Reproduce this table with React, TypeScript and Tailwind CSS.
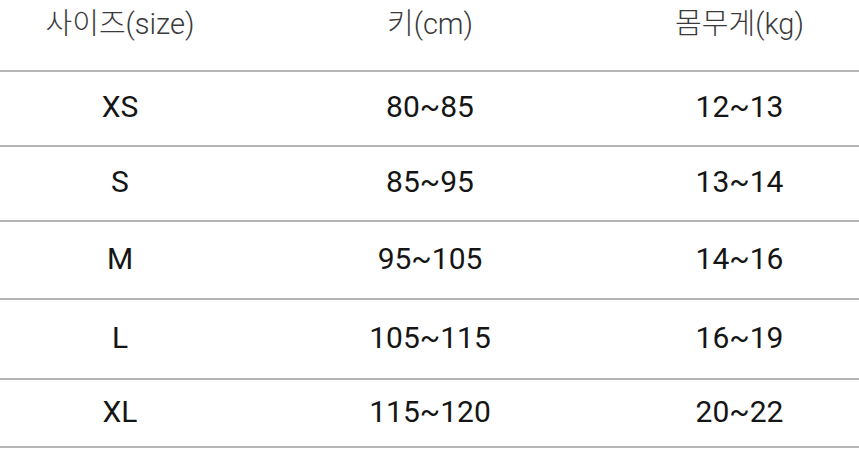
const rows = [
  { size: "XS", height: "80~85", weight: "12~13", h: "h-[73px]" },
  { size: "S", height: "85~95", weight: "13~14", h: "h-[73px]" },
  { size: "M", height: "95~105", weight: "14~16", h: "h-[76px]" },
  { size: "L", height: "105~115", weight: "16~19", h: "h-[78px]" },
  { size: "XL", height: "115~120", weight: "20~22", h: "h-[66px]" },
];

export default function App() {
  return (
    <div className="h-[452px] w-[859px] overflow-hidden bg-white font-['Roboto','Noto_Sans_CJK_KR',sans-serif]">
      <div className="flex h-[70px] items-center pb-[20px] text-[29px] font-light text-[#3a3a3a]">
        <div className="w-[240px] text-center">사이즈(size)</div>
        <div className="w-[380px] text-center">키(cm)</div>
        <div className="flex-1 text-center">몸무게(kg)</div>
      </div>
      <div className="h-[2px] bg-[#b4b4b4]" />
      {rows.map((r) => (
        <div key={r.size}>
          <div
            className={`flex ${r.h} items-center pb-[4px] text-[30px] text-[#151515]`}
          >
            <div className="w-[240px] text-center">{r.size}</div>
            <div className="w-[380px] text-center">{r.height}</div>
            <div className="flex-1 text-center">{r.weight}</div>
          </div>
          <div className="h-[2px] bg-[#b4b4b4]" />
        </div>
      ))}
    </div>
  );
}
